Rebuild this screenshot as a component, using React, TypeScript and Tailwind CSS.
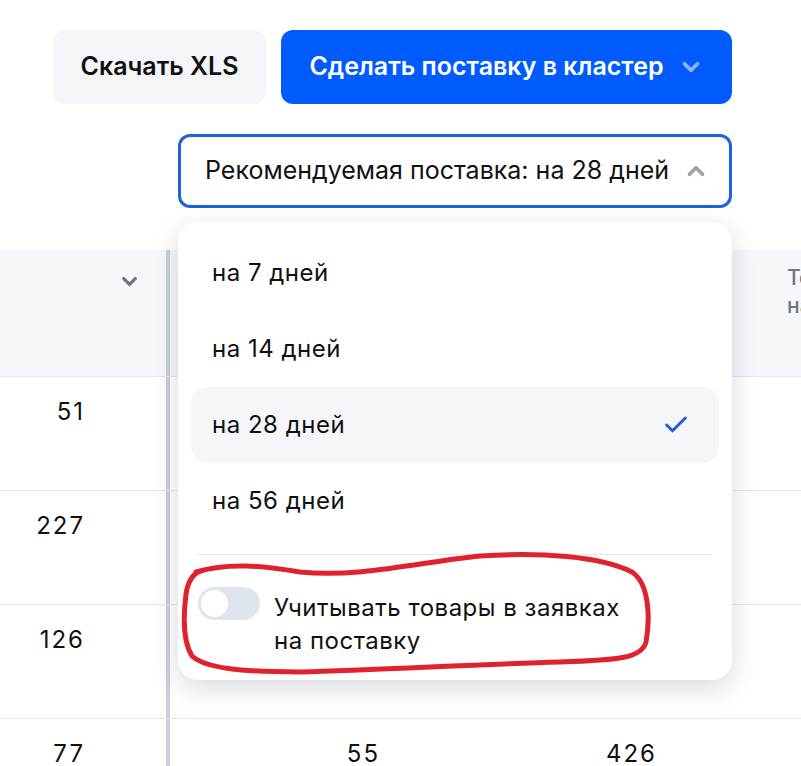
import { Check, ChevronDown, ChevronUp } from "lucide-react";

const rows = [
  { a: "51", b: "", c: "" },
  { a: "227", b: "", c: "" },
  { a: "126", b: "", c: "" },
  { a: "77", b: "55", c: "426" },
];

const options = ["на 7 дней", "на 14 дней", "на 28 дней", "на 56 дней"];

function Annotation() {
  return (
    <svg
      className="pointer-events-none absolute left-0 top-0"
      width="801"
      height="766"
      viewBox="0 0 801 766"
    >
      <path
        d="M196 572 C230 562 262 566 300 572 C360 578 420 562 480 556 C540 552 600 556 632 572 C650 584 650 620 646 642 C642 658 620 660 560 662 C480 664 380 670 300 672 C240 672 205 668 192 656 C182 640 184 610 186 594 C188 580 194 572 204 570"
        fill="none"
        stroke="#e0222e"
        strokeWidth="5"
        strokeLinecap="round"
        strokeLinejoin="round"
      />
    </svg>
  );
}

function Dropdown() {
  return (
    <div className="absolute left-[178px] top-[222px] flex h-[458px] w-[554px] flex-col rounded-[20px] bg-white px-[13px] pt-[13px] shadow-[0_8px_28px_rgba(0,26,52,0.16)]">
      {options.map((o) => {
        const active = o === "на 28 дней";
        return (
          <div
            key={o}
            className={`flex h-[76px] items-center justify-between rounded-[16px] px-[21px] text-[24px] tracking-[0.5px] text-[#111] ${
              active ? "bg-[#f4f6f9]" : ""
            }`}
          >
            <span>{o}</span>
            {active && <Check size={28} strokeWidth={2.5} className="mr-[8px] text-[#1d5ed8]" />}
          </div>
        );
      })}
      <div className="mx-[7px] mt-[15px] h-px bg-[#e4e8ee]" />
      <div className="flex items-start gap-[14px] px-[7px] pt-[32px]">
        <div className="flex h-[33px] w-[62px] shrink-0 items-center rounded-full bg-[#dfe5ed] px-[3px]">
          <div className="h-[27px] w-[27px] rounded-full bg-white" />
        </div>
        <div className="mt-[4px] text-[24px] leading-[33px] tracking-[0.5px] text-[#111]">
          Учитывать товары в заявках
          <br />
          на поставку
        </div>
      </div>
    </div>
  );
}

export default function App() {
  return (
    <div
      className="relative h-[766px] w-[801px] overflow-hidden bg-white"
      style={{ fontFamily: "Inter, 'Noto Sans', sans-serif" }}
    >
      {/* Actions */}
      <div className="flex justify-end gap-[15px] pr-[69px] pt-[30px]">
        <button className="h-[74px] w-[213px] rounded-[12px] bg-[#f3f5f8] text-[25px] font-semibold text-[#111]">
          Скачать XLS
        </button>
        <button className="flex h-[74px] w-[451px] items-center justify-center gap-[14px] rounded-[12px] bg-[#005bff] text-[25px] font-semibold text-white">
          Сделать поставку в кластер
          <ChevronDown size={26} strokeWidth={3.5} className="text-[#8fb4ff]" />
        </button>
      </div>

      <div className="flex justify-end pr-[69px] pt-[30px]">
        <div className="flex h-[74px] w-[554px] items-center justify-between rounded-[12px] border-[3px] border-[#1f62d9] pl-[24px] pr-[20px] text-[25px] text-[#111]">
          <span>Рекомендуемая поставка: на 28 дней</span>
          <ChevronUp size={26} strokeWidth={3.5} className="text-[#9aa3ad]" />
        </div>
      </div>

      {/* Table */}
      <div className="mt-[42px] w-[1000px]">
        <div className="flex h-[127px] border-b border-[#e3e8ee] bg-[#f5f7fa]">
          <div className="flex w-[166px] justify-end pr-[25px] pt-[20px]">
            <ChevronDown size={23} strokeWidth={3.5} className="text-[#6b7784]" />
          </div>
          <div className="w-[4px] bg-[#c9d0d8]" />
          <div className="w-[290px]" />
          <div className="w-[273px]" />
          <div className="pl-[54px] pt-[14px] text-[21px] font-medium leading-[28px] text-[#6b7784]">
            <div>Товары</div>
            <div>на</div>
          </div>
        </div>
        {rows.map((r, i) => (
          <div key={i} className="flex h-[114px] border-b border-[#e3e8ee] text-[24px] tracking-[2px] text-[#111]">
            <div className="flex w-[166px] justify-end pr-[81px] pt-[17px]">{r.a}</div>
            <div className="w-[4px] bg-[#c9d0d8]" />
            <div className="flex w-[290px] justify-end pr-[80px] pt-[17px]">{r.b}</div>
            <div className="flex w-[273px] justify-end pr-[76px] pt-[17px]">{r.c}</div>
          </div>
        ))}
      </div>

      <Dropdown />
      <Annotation />
    </div>
  );
}
